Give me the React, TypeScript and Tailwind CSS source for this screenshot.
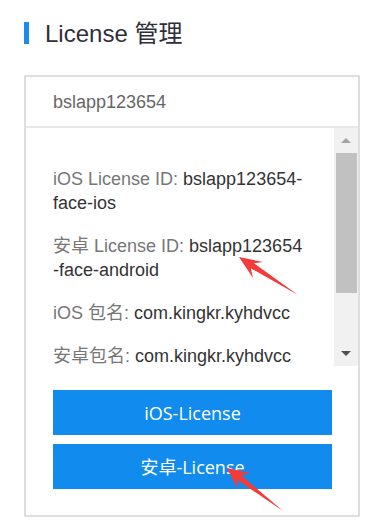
import React from 'react';

const rows = [
  { label: 'iOS License ID: ', lines: ['bslapp123654-', 'face-ios'] },
  { label: '安卓 License ID: ', lines: ['bslapp123654', '-face-android'] },
  { label: 'iOS 包名: ', lines: ['com.kingkr.kyhdvcc'] },
  { label: '安卓包名: ', lines: ['com.kingkr.kyhdvcc'] },
];

const App: React.FC = () => {
  return (
    <div className="relative w-[369px] h-[522px] bg-white overflow-hidden font-['Liberation_Sans','Noto_Sans_CJK_SC',sans-serif]">
      {/* Title */}
      <div className="flex items-start pt-[22px] pl-[24px]">
        <div className="w-[5px] h-[22px] bg-[#1a8cf0]"></div>
        <span className="ml-[16px] text-[24px] leading-[24px] text-[#2f2f3a]">License 管理</span>
      </div>

      {/* Card */}
      <div className="mt-[29px] ml-[24px] w-[336px] border-2 border-[#dedede] flex flex-col">
        <div className="h-[51px] flex items-center pl-[27px] border-b-2 border-[#e6e8ec]">
          <span className="text-[18px] leading-[24px] text-[#666666]">bslapp123654</span>
        </div>

        {/* Scroll area */}
        <div className="h-[238px] flex">
          <div className="flex-1 overflow-hidden pl-[27px] pt-[39px]">
            {rows.map((r, i) => (
              <div key={i} className="mb-[19px] text-[18px] leading-[24px]">
                {r.lines.map((l, j) => (
                  <div key={j} className="whitespace-nowrap">
                    {j === 0 && <span className="text-[#777777]">{r.label}</span>}
                    <span className="text-[#333333]">{l}</span>
                  </div>
                ))}
              </div>
            ))}
          </div>
          <div className="w-[24px] bg-[#f1f1f1] flex flex-col">
            <div className="h-[25px] flex items-center justify-center">
              <div className="w-0 h-0 border-l-[5px] border-r-[5px] border-b-[5px] border-l-transparent border-r-transparent border-b-[#a3a3a3]"></div>
            </div>
            <div className="h-[140px] ml-[2px] mr-[1px] bg-[#c1c1c1]"></div>
            <div className="flex-1"></div>
            <div className="h-[25px] flex items-center justify-center">
              <div className="w-0 h-0 border-l-[5px] border-r-[5px] border-t-[5px] border-l-transparent border-r-transparent border-t-[#505050]"></div>
            </div>
          </div>
        </div>

        {/* Buttons */}
        <div className="flex flex-col gap-[9px] pt-[24px] pb-[26px] pl-[27px] pr-[26px]">
          <div className="h-[45px] flex items-center justify-center bg-[#118cee] text-white text-[18px] leading-[24px] font-['Open_Sans','Noto_Sans_CJK_SC',sans-serif]">
            iOS-License
          </div>
          <div className="h-[45px] flex items-center justify-center bg-[#118cee] text-white text-[18px] leading-[24px] font-['Open_Sans','Noto_Sans_CJK_SC',sans-serif]">
            安卓-License
          </div>
        </div>
      </div>

      {/* Annotation arrows */}
      <svg className="absolute inset-0 pointer-events-none" width="369" height="522" viewBox="0 0 369 522">
        <polygon
          points="239,257 263,262 254,263.2 298,295 250.8,268.2 253,278"
          fill="#f33b3b"
        />
        <polygon
          points="227,468 250,473 241.5,475.5 283,511 237.7,480.3 237,488"
          fill="#f33b3b"
        />
      </svg>
    </div>
  );
};

export default App;
